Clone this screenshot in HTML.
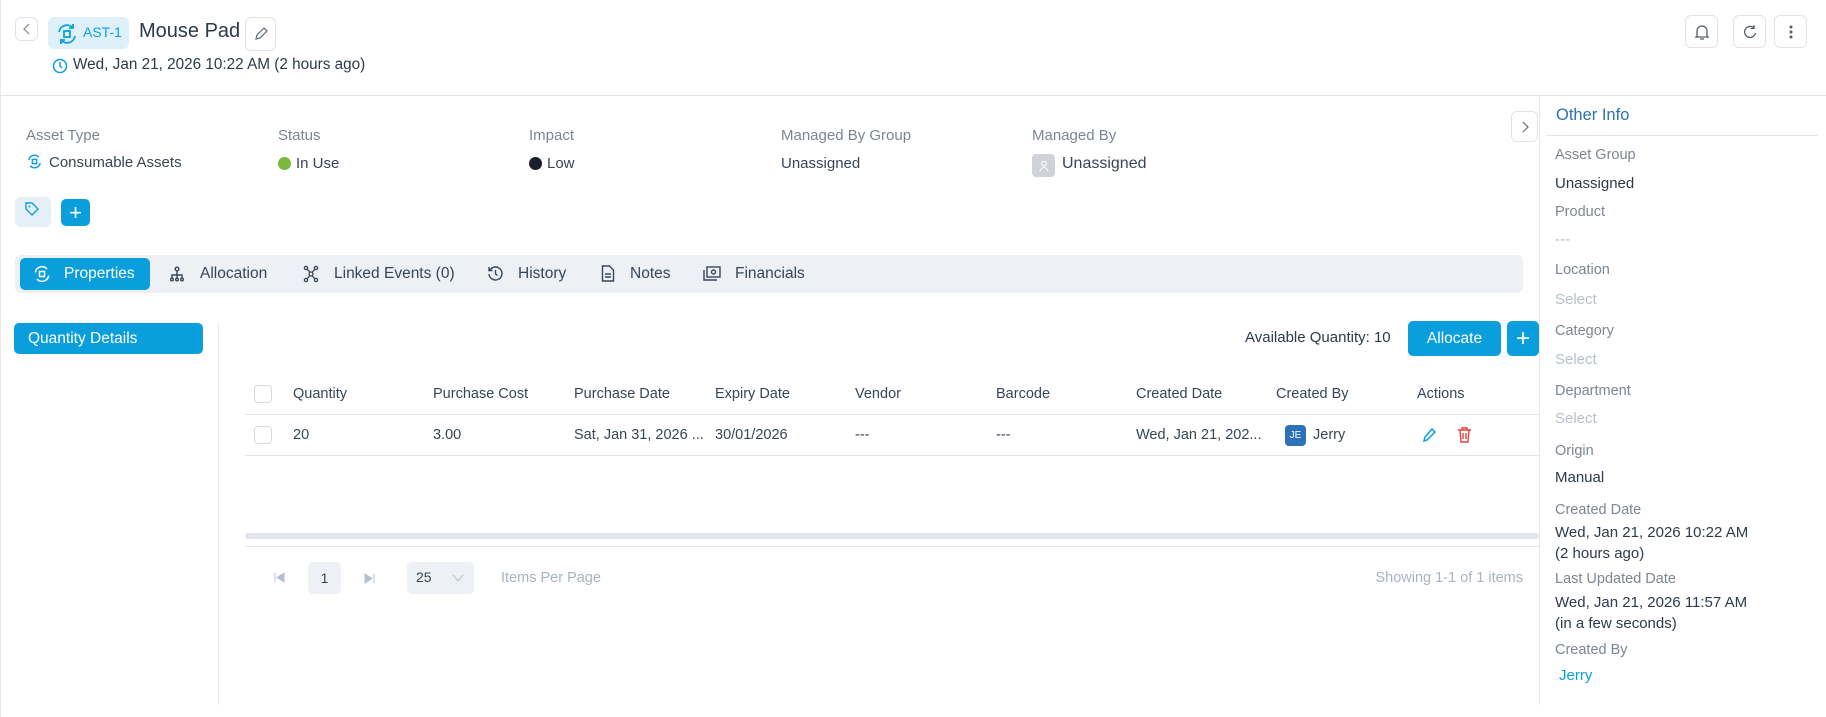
<!DOCTYPE html>
<html><head><meta charset="utf-8"><style>
*{box-sizing:border-box;margin:0;padding:0}
body{width:1826px;height:717px;overflow:hidden;background:#fff;font-family:"Liberation Sans",sans-serif;color:#364658;font-size:15px;position:relative}
.a{position:absolute;white-space:nowrap}
.btn{position:absolute;border:1px solid #dfe3ea;border-radius:6px;background:#fff;display:flex;align-items:center;justify-content:center}
.lbl{color:#7b8794;font-size:15px}
.blue{color:#0a9fdc}
.pb{background:#0a9fdc;color:#fff;border-radius:5px;display:flex;align-items:center;justify-content:center;position:absolute}
.th{font-size:14.5px;color:#364658}
.rl{color:#7b8794;font-size:14.5px}
.rv{color:#2c3a4b;font-size:15px}
.rs{color:#b5c0cc;font-size:15px}
</style></head><body>
<div style="position:absolute;left:0;top:0;width:1px;height:717px;background:#e6e9ee"></div>
<div class="btn" style="left:15px;top:17px;width:23px;height:24px"><svg width="10" height="12" viewBox="0 0 10 12"><path d="M7 1L2 6l5 5" stroke="#8a96a3" stroke-width="1.3" fill="none"/></svg></div>
<div class="a" style="left:48px;top:17px;width:81px;height:32px;background:#def1fb;border-radius:6px"></div>
<svg class="a" style="left:55px;top:22px" width="24" height="24" viewBox="0 0 24 24" fill="none" stroke="#0a9fdc" stroke-width="1.8"><path d="M4 10a8 8 0 0 1 14-4"/><path d="M20 14a8 8 0 0 1-14 4"/><path d="M18 2v4h-4M6 22v-4h4"/><rect x="9" y="9" width="6" height="6"/></svg>
<div class="a blue" style="left:83px;top:24px;font-size:14px">AST-1</div>
<div class="a" style="left:139px;top:20px;font-size:20px;color:#2c3a4b">Mouse Pad</div>
<div class="btn" style="left:245px;top:17px;width:31px;height:34px"><svg width="16" height="16" viewBox="0 0 16 16"><path d="M3 13l1-4 7-7 3 3-7 7z" stroke="#6b7785" stroke-width="1.3" fill="none"/></svg></div>
<svg class="a" style="left:52px;top:58px" width="16" height="16" viewBox="0 0 16 16"><circle cx="8" cy="8" r="6.5" stroke="#0a9fdc" stroke-width="1.5" fill="none"/><path d="M8 4v4l2 2" stroke="#0a9fdc" stroke-width="1.5" fill="none"/></svg>
<div class="a" style="left:73px;top:56px;font-size:15.3px;color:#2c3a4b">Wed, Jan 21, 2026 10:22 AM (2 hours ago)</div>
<div class="btn" style="left:1685px;top:15px;width:33px;height:33px"><svg width="16" height="18" viewBox="0 0 16 18"><path d="M3 13V8a5 5 0 0 1 10 0v5l1 1H2z M6 16h4" stroke="#555f6b" stroke-width="1.3" fill="none"/></svg></div>
<div class="btn" style="left:1733px;top:15px;width:33px;height:33px"><svg width="16" height="18" viewBox="0 0 16 18"><path d="M12 5a5.5 5.5 0 1 0 1.5 5M12 2v3.5H8.5" stroke="#555f6b" stroke-width="1.3" fill="none"/></svg></div>
<div class="btn" style="left:1774px;top:15px;width:33px;height:33px"><svg width="4" height="16"><circle cx="2" cy="3" r="1.5" fill="#555f6b"/><circle cx="2" cy="8" r="1.5" fill="#555f6b"/><circle cx="2" cy="13" r="1.5" fill="#555f6b"/></svg></div>
<div class="a" style="left:0;top:95px;width:1826px;height:1px;background:#e2e6ec"></div>
<div class="a lbl" style="left:26px;top:127px">Asset Type</div>
<svg class="a" style="left:26px;top:153px" width="17" height="17" viewBox="0 0 24 24" fill="none" stroke="#0a9fdc" stroke-width="2"><path d="M4 10a8 8 0 0 1 14-4"/><path d="M20 14a8 8 0 0 1-14 4"/><rect x="9" y="9" width="6" height="6"/></svg>
<div class="a" style="left:49px;top:154px;font-size:15px">Consumable Assets</div>
<div class="a lbl" style="left:278px;top:127px">Status</div>
<div class="a" style="left:278px;top:157px;width:13px;height:13px;border-radius:50%;background:#7ab93d"></div>
<div class="a" style="left:296px;top:155px">In Use</div>
<div class="a lbl" style="left:529px;top:127px">Impact</div>
<div class="a" style="left:529px;top:157px;width:13px;height:13px;border-radius:50%;background:#17202c"></div>
<div class="a" style="left:547px;top:155px">Low</div>
<div class="a lbl" style="left:781px;top:127px">Managed By Group</div>
<div class="a" style="left:781px;top:155px">Unassigned</div>
<div class="a lbl" style="left:1032px;top:127px">Managed By</div>
<div class="a" style="left:1032px;top:154px;width:23px;height:23px;border-radius:4px;background:#cfd2d6;display:flex;align-items:center;justify-content:center"><svg width="10" height="12" viewBox="0 0 10 12"><circle cx="5" cy="3.5" r="2.3" stroke="#fff" fill="none"/><path d="M1 11.5a4 4 0 0 1 8 0" stroke="#fff" fill="none"/></svg></div>
<div class="a" style="left:1062px;top:155px;font-size:16px">Unassigned</div>
<div class="a" style="left:15px;top:197px;width:36px;height:30px;background:#e5eff8;border-radius:6px"></div>
<svg class="a" style="left:24px;top:201px" width="16" height="16" viewBox="0 0 16 16"><path d="M2 2h6l6 6-6 6-6-6z" stroke="#0a9fdc" stroke-width="1.4" fill="none"/><circle cx="5.5" cy="5.5" r="1" fill="#0a9fdc"/></svg>
<div class="pb" style="left:61px;top:199px;width:29px;height:27px;font-size:22px">+</div>
<div class="a" style="left:15px;top:255px;width:1508px;height:38px;background:#edf0f4;border-radius:6px"></div>
<div class="pb" style="left:20px;top:258px;width:130px;height:32px;justify-content:flex-start;padding-left:12px;font-size:15.5px"><svg width="20" height="20" viewBox="0 0 24 24" fill="none" stroke="#fff" stroke-width="1.8"><path d="M4 10a8 8 0 0 1 14-4"/><path d="M20 14a8 8 0 0 1-14 4"/><rect x="9" y="9" width="6" height="6"/></svg><span style="margin-left:12px">Properties</span></div>
<svg class="a" style="left:169px;top:266px" width="16" height="16" viewBox="0 0 16 16" fill="none" stroke="#364658" stroke-width="1.4"><circle cx="8" cy="3" r="1.8"/><path d="M8 5v4M3 12V9h10v3M8 9v3"/><circle cx="3" cy="13.5" r="1.3"/><circle cx="8" cy="13.5" r="1.3"/><circle cx="13" cy="13.5" r="1.3"/></svg>
<div class="a" style="left:200px;top:265px;font-size:15.5px">Allocation</div>
<svg class="a" style="left:303px;top:265px" width="16" height="18" viewBox="0 0 16 18" fill="none" stroke="#364658" stroke-width="1.3"><circle cx="3" cy="3" r="1.6"/><circle cx="13" cy="3" r="1.6"/><circle cx="8" cy="9" r="2"/><circle cx="3" cy="15" r="1.6"/><circle cx="13" cy="15" r="1.6"/><path d="M4 4l3 3.5M12 4l-3 3.5M7 10.5l-3 3.5M9 10.5l3 3.5"/></svg>
<div class="a" style="left:334px;top:265px;font-size:15.5px">Linked Events (0)</div>
<svg class="a" style="left:487px;top:265px" width="17" height="17" viewBox="0 0 17 17" fill="none" stroke="#364658" stroke-width="1.4"><path d="M3 5a6.5 6.5 0 1 1-1 4M2 2v3.5h3.5M8.5 5v4l2 1.5"/></svg>
<div class="a" style="left:518px;top:265px;font-size:15.5px">History</div>
<svg class="a" style="left:601px;top:265px" width="14" height="17" viewBox="0 0 14 17" fill="none" stroke="#364658" stroke-width="1.4"><path d="M1.5 1h7l4 4v11h-11z M4 9h6M4 12h6"/></svg>
<div class="a" style="left:630px;top:265px;font-size:15.5px">Notes</div>
<svg class="a" style="left:703px;top:266px" width="18" height="15" viewBox="0 0 18 15" fill="none" stroke="#364658" stroke-width="1.4"><rect x="4" y="1" width="13" height="10"/><path d="M1 4v10h13"/><circle cx="10.5" cy="6" r="2"/></svg>
<div class="a" style="left:735px;top:265px;font-size:15.5px">Financials</div>
<div class="btn" style="left:1511px;top:111px;width:27px;height:31px"><svg width="8" height="12" viewBox="0 0 8 12"><path d="M2 1l5 5-5 5" stroke="#6b7785" stroke-width="1.3" fill="none"/></svg></div>
<div class="a" style="left:1539px;top:95px;width:1px;height:610px;background:#e6e9ee"></div>
<div class="a" style="left:1556px;top:106px;font-size:16.5px;color:#2d72b8">Other Info</div>
<div class="a" style="left:1546px;top:135px;width:272px;height:1px;background:#e2e6ec"></div>
<div class="a rl" style="left:1555px;top:147px">Asset Group</div>
<div class="a rv" style="left:1555px;top:175px">Unassigned</div>
<div class="a rl" style="left:1555px;top:204px">Product</div>
<div class="a rs" style="left:1555px;top:231px">---</div>
<div class="a rl" style="left:1555px;top:262px">Location</div>
<div class="a rs" style="left:1555px;top:291px">Select</div>
<div class="a rl" style="left:1555px;top:323px">Category</div>
<div class="a rs" style="left:1555px;top:351px">Select</div>
<div class="a rl" style="left:1555px;top:383px">Department</div>
<div class="a rs" style="left:1555px;top:410px">Select</div>
<div class="a rl" style="left:1555px;top:443px">Origin</div>
<div class="a rv" style="left:1555px;top:469px">Manual</div>
<div class="a rl" style="left:1555px;top:502px">Created Date</div>
<div class="a rv" style="left:1555px;top:524px">Wed, Jan 21, 2026 10:22 AM</div>
<div class="a rv" style="left:1555px;top:545px">(2 hours ago)</div>
<div class="a rl" style="left:1555px;top:571px">Last Updated Date</div>
<div class="a rv" style="left:1555px;top:594px">Wed, Jan 21, 2026 11:57 AM</div>
<div class="a rv" style="left:1555px;top:615px">(in a few seconds)</div>
<div class="a rl" style="left:1555px;top:642px">Created By</div>
<div class="a blue" style="left:1559px;top:667px;font-size:15px">Jerry</div>
<div class="pb" style="left:14px;top:323px;width:189px;height:31px;justify-content:flex-start;padding-left:14px;font-size:15.5px">Quantity Details</div>
<div class="a" style="left:218px;top:323px;width:1px;height:382px;background:#e6e9ee"></div>
<div class="a" style="left:1245px;top:329px;font-size:15px;color:#2c3a4b">Available Quantity: 10</div>
<div class="pb" style="left:1408px;top:321px;width:93px;height:35px;font-size:15.5px">Allocate</div>
<div class="pb" style="left:1507px;top:321px;width:32px;height:35px;font-size:24px">+</div>
<div class="a" style="left:254px;top:385px;width:18px;height:18px;border:1px solid #d5dae1;border-radius:4px"></div>
<div class="a th" style="left:293px;top:386px">Quantity</div>
<div class="a th" style="left:433px;top:386px">Purchase Cost</div>
<div class="a th" style="left:574px;top:386px">Purchase Date</div>
<div class="a th" style="left:715px;top:386px">Expiry Date</div>
<div class="a th" style="left:855px;top:386px">Vendor</div>
<div class="a th" style="left:996px;top:386px">Barcode</div>
<div class="a th" style="left:1136px;top:386px">Created Date</div>
<div class="a th" style="left:1276px;top:386px">Created By</div>
<div class="a th" style="left:1417px;top:386px">Actions</div>
<div class="a" style="left:245px;top:414px;width:1294px;height:1px;background:#e2e6ec"></div>
<div class="a" style="left:254px;top:426px;width:18px;height:18px;border:1px solid #d5dae1;border-radius:4px"></div>
<div class="a th" style="left:293px;top:427px">20</div>
<div class="a th" style="left:433px;top:427px">3.00</div>
<div class="a th" style="left:574px;top:427px">Sat, Jan 31, 2026 ...</div>
<div class="a th" style="left:715px;top:427px">30/01/2026</div>
<div class="a th" style="left:855px;top:427px">---</div>
<div class="a th" style="left:996px;top:427px">---</div>
<div class="a th" style="left:1136px;top:427px">Wed, Jan 21, 202...</div>
<div class="a" style="left:1285px;top:425px;width:21px;height:21px;border-radius:4px;background:#2d72b8;color:#fff;font-size:10px;display:flex;align-items:center;justify-content:center">JE</div>
<div class="a th" style="left:1313px;top:427px">Jerry</div>
<svg class="a" style="left:1421px;top:427px" width="16" height="16" viewBox="0 0 16 16"><path d="M3 14l1-4 7-8 3 3-8 8z" stroke="#0a9fdc" stroke-width="1.5" fill="none"/></svg>
<svg class="a" style="left:1457px;top:426px" width="15" height="17" viewBox="0 0 15 17"><path d="M1 4h13M5 4V2h5v2M3 4l1 12h7l1-12M6 7v6M9 7v6" stroke="#e5403a" stroke-width="1.4" fill="none"/></svg>
<div class="a" style="left:245px;top:455px;width:1294px;height:1px;background:#e2e6ec"></div>
<div class="a" style="left:245px;top:533px;width:1294px;height:6px;background:#dfe4ea;border-radius:3px"></div>
<div class="a" style="left:245px;top:546px;width:1294px;height:1px;background:#e2e6ec"></div>
<svg class="a" style="left:274px;top:572px" width="11" height="11" viewBox="0 0 11 11"><path d="M1 1v9M10 1L3 5.5 10 10z" stroke="#b5c0cc" fill="#b5c0cc"/></svg>
<div class="a" style="left:308px;top:562px;width:33px;height:32px;background:#edf0f4;border-radius:5px;display:flex;align-items:center;justify-content:center;font-size:14px">1</div>
<svg class="a" style="left:364px;top:573px" width="11" height="11" viewBox="0 0 11 11"><path d="M10 1v9M1 1l7 4.5L1 10z" stroke="#b5c0cc" fill="#b5c0cc"/></svg>
<div class="a" style="left:407px;top:562px;width:67px;height:32px;background:#edf0f4;border-radius:5px"></div>
<div class="a" style="left:416px;top:569px;font-size:14px">25</div>
<svg class="a" style="left:452px;top:574px" width="12" height="8" viewBox="0 0 12 8"><path d="M1 1l5 6 5-6" stroke="#b5c0cc" fill="none"/></svg>
<div class="a" style="left:501px;top:570px;font-size:14.5px;color:#a7b3c1">Items Per Page</div>
<div class="a" style="right:303px;top:570px;font-size:14.5px;color:#a7b3c1">Showing 1-1 of 1 items</div>
</body></html>
